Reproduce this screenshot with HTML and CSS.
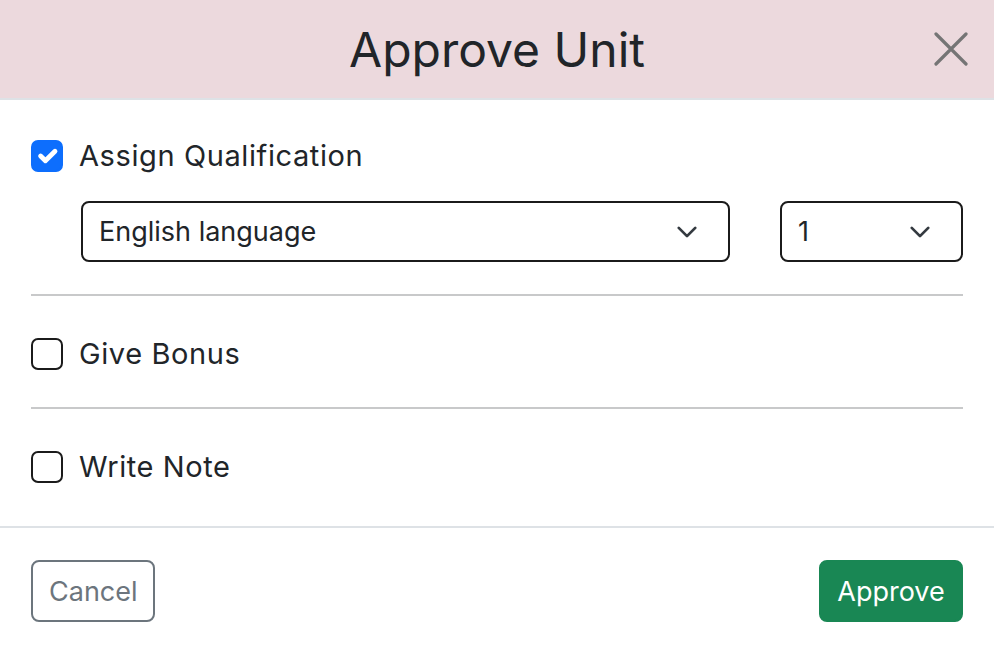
FILE: index.html
```html
<!DOCTYPE html>
<html lang="en">
<head>
<meta charset="utf-8">
<title>Approve Unit</title>
<link rel="stylesheet" href="styles.css">
</head>
<body>
<div class="modal">
  <header class="modal-header">
    <h5 class="modal-title">Approve Unit</h5>
    <button class="close-btn" aria-label="Close">
      <svg width="34" height="34" viewBox="0 0 34 34"><path d="M2 2 32 32M32 2 2 32" stroke="#757575" stroke-width="3.2" stroke-linecap="round" fill="none"/></svg>
    </button>
  </header>
  <main class="modal-body">
    <section class="section">
      <label class="check-row">
        <span class="checkbox checked">
          <svg width="32" height="32" viewBox="0 0 20 20"><path d="m6 10 3 3 6-6" fill="none" stroke="#fff" stroke-linecap="round" stroke-linejoin="round" stroke-width="3"/></svg>
        </span>
        <span class="check-label">Assign Qualification</span>
      </label>
      <div class="select-row">
        <div class="select select-wide">
          <span>English language</span>
          <svg class="chev" width="22" height="14" viewBox="0 0 16 10"><path d="m2 2 6 6 6-6" fill="none" stroke="#343a40" stroke-linecap="round" stroke-linejoin="round" stroke-width="2"/></svg>
        </div>
        <div class="select select-narrow">
          <span>1</span>
          <svg class="chev" width="22" height="14" viewBox="0 0 16 10"><path d="m2 2 6 6 6-6" fill="none" stroke="#343a40" stroke-linecap="round" stroke-linejoin="round" stroke-width="2"/></svg>
        </div>
      </div>
    </section>
    <hr class="divider">
    <section class="section">
      <label class="check-row">
        <span class="checkbox"></span>
        <span class="check-label">Give Bonus</span>
      </label>
    </section>
    <hr class="divider">
    <section class="section">
      <label class="check-row">
        <span class="checkbox"></span>
        <span class="check-label">Write Note</span>
      </label>
    </section>
  </main>
  <footer class="modal-footer">
    <button class="btn btn-outline">Cancel</button>
    <button class="btn btn-success">Approve</button>
  </footer>
</div>
</body>
</html>
```

FILE: styles.css
```css
* { box-sizing: border-box; }
html, body {
  margin: 0;
  padding: 0;
  background: #fff;
}
body {
  font-family: Inter, "Noto Sans", "Liberation Sans", sans-serif;
  color: #212529;
  font-size: 28px;
}
.modal {
  width: 994px;
}
.modal-header {
  position: relative;
  height: 100px;
  background: #ecd9dd;
  border-bottom: 2px solid #dee2e6;
  display: flex;
  align-items: center;
  justify-content: center;
}
.modal-title {
  margin: 0;
  font-size: 48px;
  font-weight: 400;
  line-height: 1;
  padding-top: 2px;
}
.close-btn {
  position: absolute;
  right: 26px;
  top: 32px;
  padding: 0;
  border: 0;
  background: none;
  width: 34px;
  height: 34px;
  display: flex;
}
.modal-body {
  padding: 35px 31px 38px;
}
.check-row {
  display: flex;
  align-items: center;
  gap: 16px;
  height: 42px;
}
.checkbox {
  width: 32px;
  height: 32px;
  border: 2px solid #1b1b1b;
  border-radius: 7px;
  display: flex;
  align-items: center;
  justify-content: center;
  flex: none;
}
.checkbox.checked {
  background: #0d6efd;
  border-color: #0d6efd;
}
.checkbox.checked svg {
  flex: none;
}
.check-label {
  font-size: 29px;
  letter-spacing: 0.6px;
  line-height: 42px;
}
.select-row {
  display: flex;
  gap: 50px;
  margin-top: 24px;
  padding-left: 50px;
}
.select {
  height: 61px;
  border: 2px solid #1b1b1b;
  border-radius: 8px;
  display: flex;
  align-items: center;
  justify-content: space-between;
  padding: 0 30px 0 16px;
  font-size: 27px;
}
.select-wide {
  flex: 1;
}
.select-narrow {
  width: 183px;
}
.chev { flex: none; }
.divider {
  border: 0;
  border-top: 2px solid #c8c9ca;
  margin: 32px 0 37px;
}
.modal-footer {
  border-top: 2px solid #dee2e6;
  padding: 32px 31px 46px;
  display: flex;
  justify-content: space-between;
  align-items: center;
}
.btn {
  font-family: inherit;
  font-size: 27px;
  height: 62px;
  border-radius: 8px;
  padding: 0 16px;
  cursor: pointer;
}
.btn-outline {
  background: #fff;
  color: #6c757d;
  border: 2px solid #6c757d;
  width: 124px;
}
.btn-success {
  background: #198754;
  color: #fff;
  border: 2px solid #198754;
  width: 144px;
}
```
